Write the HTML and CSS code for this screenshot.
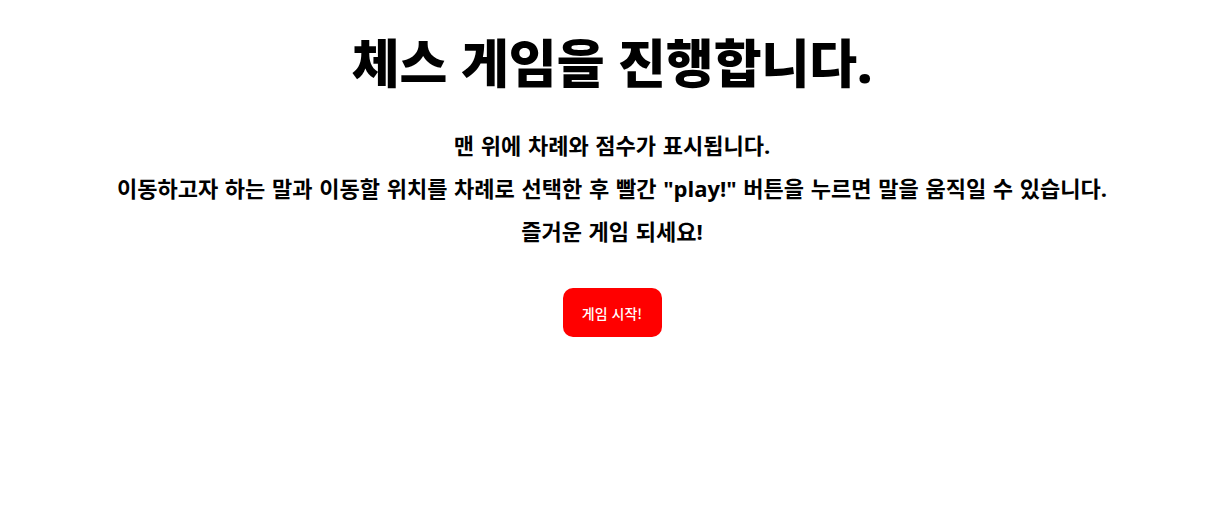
FILE: index.html
```html
<!DOCTYPE html>
<html lang="ko">
<head>
<meta charset="utf-8">
<link rel="stylesheet" href="styles.css">
</head>
<body>
<main class="intro">
  <h1 class="title">체스 게임을 진행합니다.</h1>
  <p class="line">맨 위에 차례와 점수가 표시됩니다.</p>
  <p class="line">이동하고자 하는 말과 이동할 위치를 차례로 선택한 후 빨간 "play!" 버튼을 누르면 말을 움직일 수 있습니다.</p>
  <p class="line">즐거운 게임 되세요!</p>
  <button class="start">게임 시작!</button>
</main>
</body>
</html>
```
FILE: styles.css
```css
body {
  margin: 0;
  background: #fff;
  font-family: "Open Sans", "Noto Sans CJK KR", sans-serif;
  color: #000;
}
.intro {
  display: flex;
  flex-direction: column;
  align-items: center;
  padding-top: 25px;
}
.title {
  font-size: 52px;
  font-weight: 900;
  margin: 0 0 30px;
  line-height: 1.45;
}
.line {
  font-size: 22px;
  font-weight: 700;
  word-spacing: 1px;
  margin: 0 0 11px;
  line-height: 1.45;
}
.start {
  margin-top: 29px;
  width: 99px;
  height: 49px;
  border: none;
  border-radius: 10px;
  background: #ff0000;
  color: #fff;
  font-family: "Noto Sans CJK KR", sans-serif;
  font-size: 14px;
  font-weight: 500;
}
```
